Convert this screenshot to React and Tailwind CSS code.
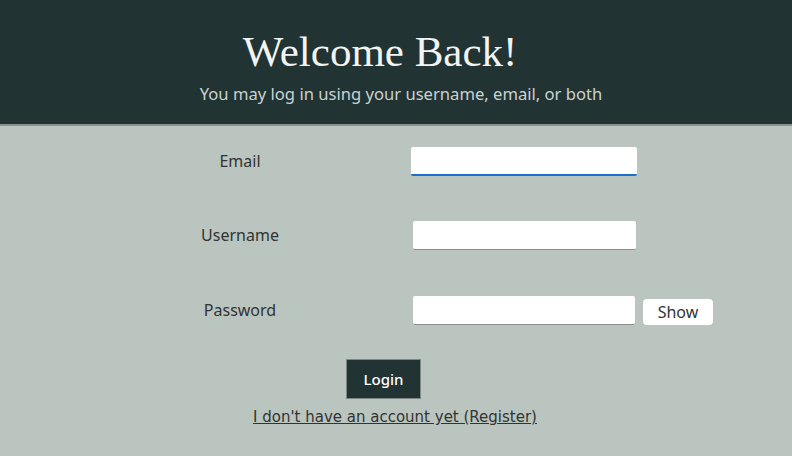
import React from 'react';

const App = () => {
  return (
    <div className="w-[792px] h-[456px] bg-[#bac5bf] overflow-hidden font-['Noto_Sans',sans-serif]">
      {/* Header */}
      <header className="h-[126px] bg-[#223333] border-b-2 border-[#8a9290] flex flex-col items-center pt-[28px]">
        <h1 className="text-[43px] leading-[48px] text-[#f2f4f4] font-['Liberation_Serif',serif] ml-[-32px]">
          Welcome Back!
        </h1>
        <p className="mt-[8px] text-[16.6px] leading-[20px] text-[#c9d2d1] ml-[10px]">
          You may log in using your username, email, or both
        </p>
      </header>

      {/* Form */}
      <form className="flex flex-col pt-[20px]" onSubmit={(e) => e.preventDefault()}>
        <div className="flex items-center h-[30px]">
          <label className="w-[120px] ml-[180px] text-center text-[16px] text-[#333]">Email</label>
          <input
            type="email"
            className="ml-[111px] w-[226px] h-[29px] bg-white border-b-2 border-[#1a6fc9] rounded-[2px] outline-none"
          />
        </div>

        <div className="flex items-center h-[30px] mt-[44px]">
          <label className="w-[120px] ml-[180px] text-center text-[16px] text-[#333]">Username</label>
          <input
            type="text"
            className="ml-[113px] w-[223px] h-[29px] bg-white border-b border-[#8a8f8d] rounded-[2px] outline-none"
          />
        </div>

        <div className="flex items-center h-[30px] mt-[45px]">
          <label className="w-[120px] ml-[180px] text-center text-[16px] text-[#333]">Password</label>
          <input
            type="password"
            className="ml-[113px] w-[222px] h-[29px] bg-white border-b border-[#8a8f8d] rounded-[2px] outline-none"
          />
          <button
            type="button"
            className="ml-[8px] w-[70px] h-[26px] mt-[4px] bg-white rounded-[4px] text-[16px] text-[#333]"
          >
            Show
          </button>
        </div>

        <button
          type="submit"
          className="mt-[34px] ml-[346px] w-[75px] h-[40px] bg-[#223333] border border-[#7d8785] text-white text-[15px] font-medium"
        >
          Login
        </button>

        <a
          href="#"
          className="mt-[8px] self-center ml-[-2px] text-[15px] leading-[20px] underline text-[#333] font-['DejaVu_Sans',sans-serif]"
        >
          I don't have an account yet (Register)
        </a>
      </form>
    </div>
  );
};

export default App;
